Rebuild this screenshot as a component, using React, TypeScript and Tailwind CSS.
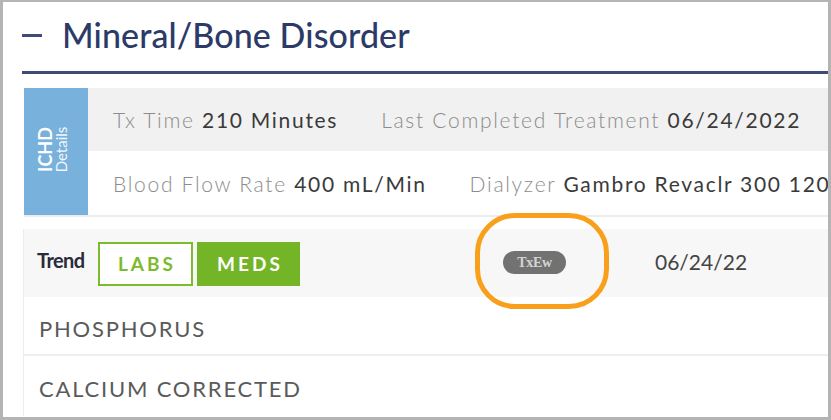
import React from "react";

export default function App() {
  const font = { fontFamily: "Lato, 'Open Sans', sans-serif" };
  return (
    <div
      className="w-[831px] h-[420px] bg-white border-[#b4b4b4] border-l-[3px] border-r-[3px] border-t-2 border-b-[3px] overflow-hidden relative"
      style={font}
    >
      {/* Header */}
      <div className="pl-[19px] h-[69px] flex items-center">
        <div className="w-[20px] h-[3px] bg-[#3e4c7c] mt-[-2px]" />
        <div className="ml-[20px] text-[34px] leading-none text-[#2c3a68] font-medium mt-[-4px] tracking-[0.1px]">
          Mineral/Bone Disorder
        </div>
      </div>
      <div className="ml-[19px] h-[3px] bg-[#3e4a78]" />

      {/* ICHD details */}
      <div className="ml-[21px] mt-[14px] flex h-[129px] border-b-2 border-[#ececec]">
        <div className="w-[64px] bg-[#78b1dc] flex items-center justify-center">
          <div className="-rotate-90 text-white text-center whitespace-nowrap -ml-[6px] mt-[-4px]">
            <div className="text-[18px] leading-[17px] font-bold">ICHD</div>
            <div className="text-[15px] leading-[14px] text-[#f2f7fb]">Details</div>
          </div>
        </div>
        <div className="flex-1 flex flex-col text-[21px] tracking-[1.7px] whitespace-nowrap overflow-hidden">
          <div className="h-[63px] bg-[#f1f1f1] flex items-center pl-[25px]">
            <div className="leading-none">
              <span className="text-[#8c8c8c] font-light">Tx Time </span>
              <span className="text-[#3a3a3a]">210 Minutes</span>
              <span className="inline-block w-[43px]" />
              <span className="text-[#8c8c8c] font-light">Last Completed Treatment </span>
              <span className="text-[#3a3a3a]">06/24/2022</span>
            </div>
          </div>
          <div className="h-[64px] bg-white flex items-center pl-[25px]">
            <div className="leading-none">
              <span className="text-[#8c8c8c] font-light">Blood Flow Rate </span>
              <span className="text-[#3a3a3a]">400 mL/Min</span>
              <span className="inline-block w-[43px]" />
              <span className="text-[#8c8c8c] font-light">Dialyzer </span>
              <span className="text-[#3a3a3a]">Gambro Revaclr 300 120</span>
            </div>
          </div>
        </div>
      </div>

      {/* Trend table */}
      <div className="ml-[20px] mt-[12px] border-l border-[#ececec]">
        <div className="h-[68px] bg-[#f7f7f7] flex items-center">
          <span className="ml-[13px] text-[20px] font-bold text-[#2a2a3a] tracking-[-0.6px] mt-[-6px] w-[54px]">Trend</span>
          <div className="ml-[7px] flex mt-[2px]">
            <div className="w-[95px] h-[44px] border-2 border-[#7cba2e] bg-white text-[#7cba2e] font-bold text-[19px] tracking-[3px] flex items-center justify-center pl-[3px]">
              LABS
            </div>
            <div className="ml-[4px] w-[103px] h-[44px] bg-[#74b527] text-white font-bold text-[19px] tracking-[3px] flex items-center justify-center pl-[3px]">
              MEDS
            </div>
          </div>
          <div className="ml-[203px] w-[63px] h-[23px] rounded-full bg-[#727272] text-[#d4d4d4] text-[14px] font-bold flex items-center justify-center mt-[-2px] tracking-[-0.3px]" style={{ fontFamily: "'Liberation Serif', serif" }}>
            TxEw
          </div>
          <div className="ml-[89px] text-[21px] text-[#444] mt-[-2px]">06/24/22</div>
        </div>
        <div className="h-[59px] flex items-center pl-[15px] pt-[5px] text-[22px] tracking-[1.8px] text-[#5a5a5a] border-b-2 border-[#eeeeee]">
          PHOSPHORUS
        </div>
        <div className="h-[60px] flex items-center pl-[15px] pt-[4px] text-[22px] tracking-[1.8px] text-[#5a5a5a]">
          CALCIUM CORRECTED
        </div>
      </div>

      {/* Orange annotation */}
      <div className="absolute left-[472px] top-[211px] w-[134px] h-[96px] rounded-[40px] border-[5px] border-[#f8a01c]" />
    </div>
  );
}
